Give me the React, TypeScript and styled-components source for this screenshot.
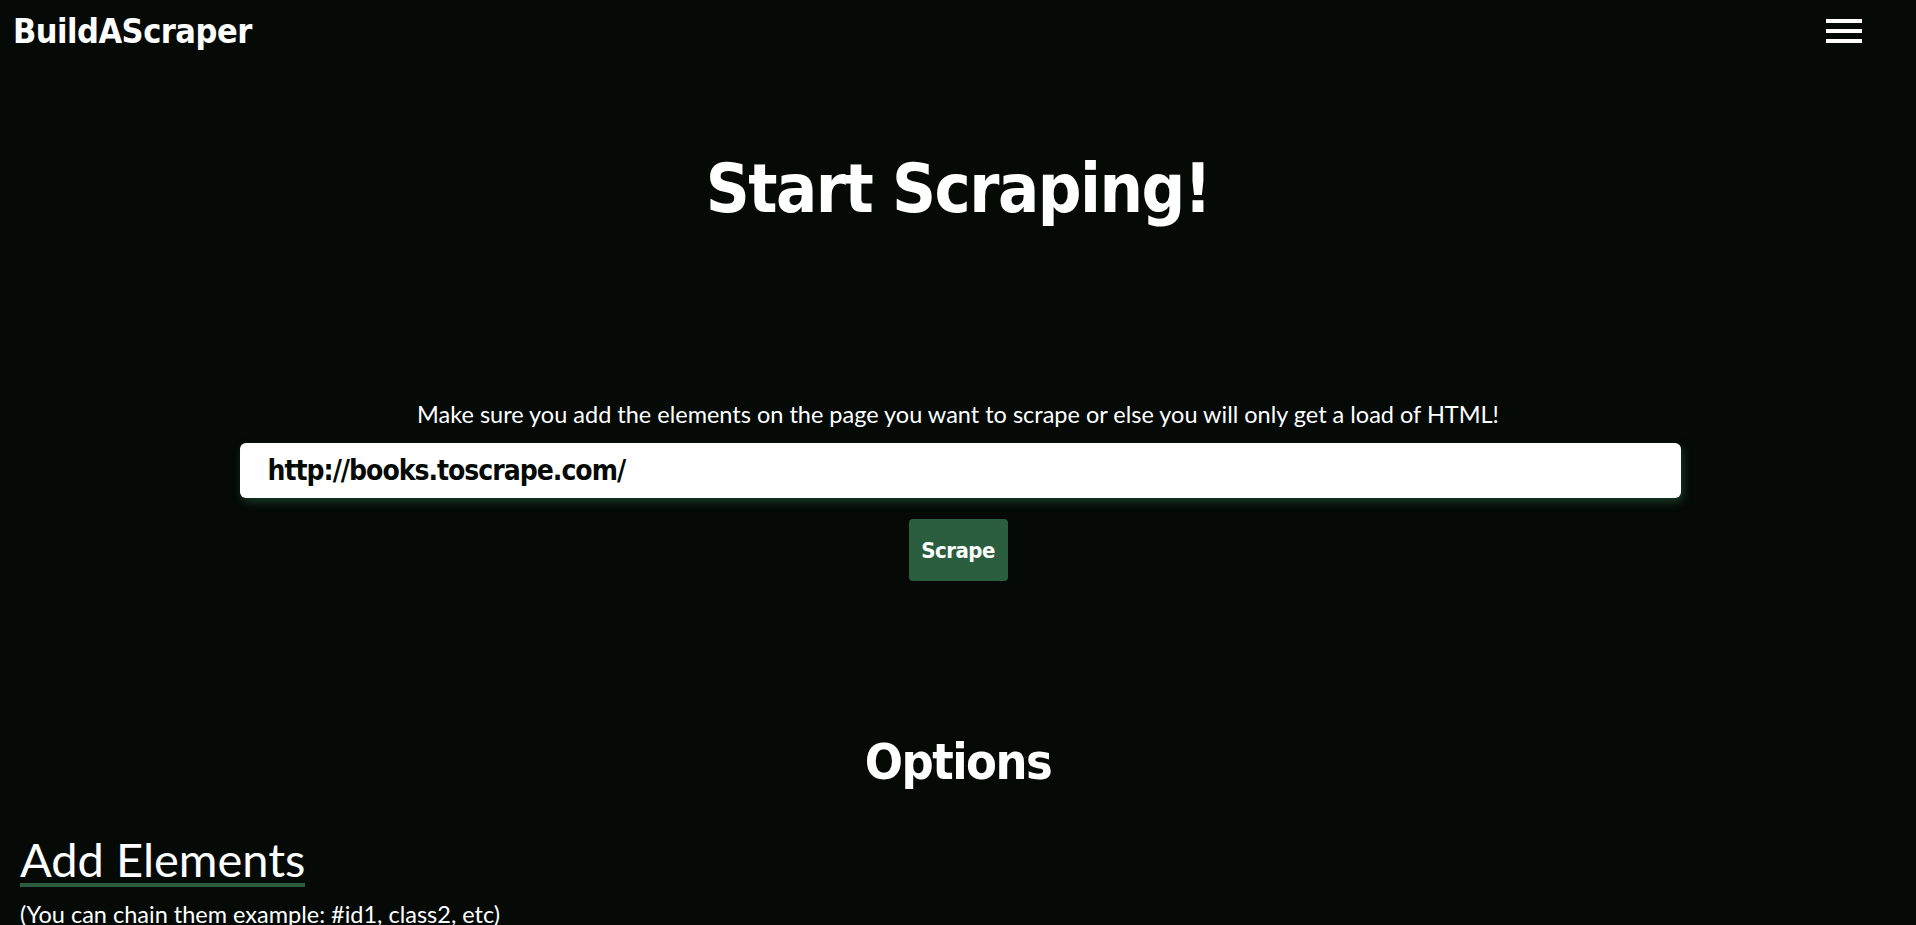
import { useState } from "react";
import styled, { createGlobalStyle } from "styled-components";

const GlobalStyle = createGlobalStyle`
  * {
    box-sizing: border-box;
  }
  body {
    margin: 0;
    background-color: #050a07;
    color: #ffffff;
    font-family: Lato, "Open Sans", sans-serif;
  }
`;

// no Teko offline, so a condensed bold stands in for the display font
const heading = `"DejaVu Sans Condensed", "DejaVu Sans", "Liberation Sans", sans-serif`;

const Header = styled.header`
  height: 62px;
  display: flex;
  align-items: center;
  justify-content: space-between;
  padding: 0 54px 0 13px;
`;

const Logo = styled.a`
  font-family: ${heading};
  font-weight: 700;
  font-size: 34px;
  letter-spacing: -0.5px;
  line-height: 1;
  color: #ffffff;
  text-decoration: none;
`;

const Burger = styled.button`
  width: 36px;
  padding: 0;
  border: none;
  background: transparent;
  display: flex;
  flex-direction: column;
  gap: 6px;
  cursor: pointer;

  span {
    display: block;
    height: 4px;
    width: 100%;
    background-color: #ffffff;
  }
`;

const Hero = styled.section`
  display: flex;
  flex-direction: column;
  align-items: center;
`;

const Title = styled.h1`
  font-family: ${heading};
  font-weight: 700;
  font-size: 68px;
  letter-spacing: -1.5px;
  line-height: 1;
  margin: 93px 0 0;
`;

const Hint = styled.p`
  font-size: 23.5px;
  line-height: 24px;
  margin: 179px 0 0;
`;

const UrlInput = styled.input`
  width: 1441px;
  height: 55px;
  margin: 17px 0 0 4px;
  padding: 0 28px;
  border: none;
  border-radius: 6px;
  background-color: #ffffff;
  box-shadow: 2px 4px 8px rgba(42, 94, 62, 0.55);
  font-family: ${heading};
  font-weight: 700;
  font-size: 28px;
  letter-spacing: -1px;
  color: #050a07;
  outline: none;
`;

const ScrapeButton = styled.button`
  width: 99px;
  height: 62px;
  margin-top: 21px;
  border: none;
  border-radius: 4px;
  background-color: #2a5e3e;
  color: #ffffff;
  font-family: ${heading};
  font-weight: 700;
  font-size: 22px;
  letter-spacing: -0.5px;
  cursor: pointer;
`;

const OptionsTitle = styled.h2`
  font-family: ${heading};
  font-weight: 700;
  font-size: 50px;
  letter-spacing: -1.5px;
  line-height: 1;
  margin: 156px 0 0;
`;

const Options = styled.section`
  padding: 0 20px;
`;

const SectionTitle = styled.h3`
  display: inline-block;
  font-weight: 400;
  font-size: 47px;
  line-height: 1;
  margin: 49px 0 0;
  border-bottom: 4px solid #2a5e3e;
`;

const Note = styled.p`
  font-size: 23.5px;
  line-height: 1.2;
  margin: 13px 0 0;
`;

const App = () => {
  const [url, setUrl] = useState("http://books.toscrape.com/");

  return (
    <>
      <GlobalStyle />
      <Header>
        <Logo href="#">BuildAScraper</Logo>
        <Burger type="button" aria-label="menu">
          <span />
          <span />
          <span />
        </Burger>
      </Header>
      <Hero>
        <Title>Start Scraping!</Title>
        <Hint>
          Make sure you add the elements on the page you want to scrape or else
          you will only get a load of HTML!
        </Hint>
        <UrlInput value={url} onChange={(e) => setUrl(e.target.value)} />
        <ScrapeButton type="button">Scrape</ScrapeButton>
        <OptionsTitle>Options</OptionsTitle>
      </Hero>
      <Options>
        <SectionTitle>Add Elements</SectionTitle>
        <Note>(You can chain them example: #id1, class2, etc)</Note>
      </Options>
    </>
  );
};

export default App;
